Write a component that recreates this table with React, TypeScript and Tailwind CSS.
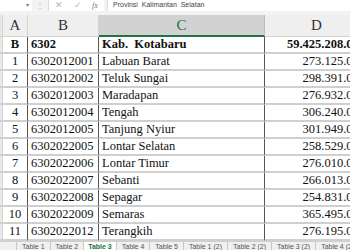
import React from 'react';

const rows = [
  ['1', '6302012001', 'Labuan Barat', '273.125.000'],
  ['2', '6302012002', 'Teluk Sungai', '298.391.000'],
  ['3', '6302012003', 'Maradapan', '276.932.000'],
  ['4', '6302012004', 'Tengah', '306.240.000'],
  ['5', '6302012005', 'Tanjung Nyiur', '301.949.000'],
  ['6', '6302022005', 'Lontar Selatan', '258.529.000'],
  ['7', '6302022006', 'Lontar Timur', '276.010.000'],
  ['8', '6302022007', 'Sebanti', '266.013.000'],
  ['9', '6302022008', 'Sepagar', '254.831.000'],
  ['10', '6302022009', 'Semaras', '365.495.000'],
  ['11', '6302022012', 'Terangkih', '276.195.000'],
];

const tabs = ['Table 1', 'Table 2', 'Table 3', 'Table 4', 'Table 5', 'Table 1 (2)', 'Table 2 (2)', 'Table 3 (2)', 'Table 4 (2)'];

const cell = 'h-[17px] flex items-center border-b-2 border-[#cfcfcf] whitespace-nowrap overflow-hidden';

const App = () => {
  return (
    <div className="w-[350px] h-[250px] overflow-hidden bg-white flex flex-col font-['Liberation_Serif',serif]">
      {/* FORMULA BAR */}
      <div className="h-[15px] shrink-0 bg-[#f3f3f3] flex items-start gap-0 font-['Liberation_Sans',sans-serif]">
        <div className="w-[32px] h-[11px] bg-white flex items-center justify-end pr-[3px] text-[6px] text-[#777]">▾</div>
        <div className="w-[16px] h-[11px] flex items-center justify-center text-[8px] text-[#aaa]">⋮</div>
        <div className="w-[56px] h-[11px] bg-white border-l border-[#dcdcdc] flex items-center text-[#b5b5b5]">
          <span className="w-[19px] text-center text-[9px]">✕</span>
          <span className="w-[19px] text-center text-[9px]">✓</span>
          <span className="w-[16px] text-center text-[8px] italic font-['Liberation_Serif',serif] text-[#777]">fx</span>
        </div>
        <div className="ml-[3px] flex-1 h-[11px] bg-white border-l border-[#dcdcdc] flex items-center pl-[5px] text-[7px] text-[#444]">
          Provinsi&nbsp; Kalimantan&nbsp; Selatan
        </div>
      </div>

      {/* SHEET */}
      <div className="grid grid-cols-[3px_25px_71px_166px_103px] w-[368px] text-[12.5px] text-[#111]">
        {/* column headers */}
        <div className="h-[22px] bg-[#e6e6e6] border-r border-[#d4d4d4] border-b border-b-[#d4d4d4]" />
        <div className="h-[22px] bg-[#efefef] border-r border-[#d4d4d4] border-b border-b-[#d4d4d4] flex items-center justify-center text-[15px] text-[#333]">A</div>
        <div className="h-[22px] bg-[#efefef] border-r border-[#d4d4d4] border-b border-b-[#d4d4d4] flex items-center justify-center text-[15px] text-[#333]">B</div>
        <div className="h-[22px] bg-[#d2d2d2] border-r border-[#bdbdbd] border-b-2 border-b-[#217346] flex items-center justify-center text-[15px] text-[#217346]">C</div>
        <div className="h-[22px] bg-[#efefef] border-b border-b-[#d4d4d4] flex items-center justify-center text-[15px] text-[#333]">D</div>

        {/* header data row */}
        <div className="h-[17px] bg-[#e9e9e9] border-r border-[#d4d4d4] border-b-2 border-b-[#cfcfcf]" />
        <div className={`${cell} justify-center border-r border-r-[#555] font-bold`}>B</div>
        <div className={`${cell} pl-[3px] border-r border-r-[#555] font-bold`}>6302</div>
        <div className={`${cell} pl-[3px] border-r border-r-[#555] font-bold`}>Kab.&nbsp; Kotabaru</div>
        <div className={`${cell} justify-end pr-[3px] font-bold`}>59.425.208.000</div>

        {rows.map((r) => (
          <React.Fragment key={r[0]}>
            <div className="h-[17px] bg-[#e9e9e9] border-r border-[#d4d4d4] border-b-2 border-b-[#cfcfcf]" />
            <div className={`${cell} justify-center border-r border-r-[#555]`}>{r[0]}</div>
            <div className={`${cell} pl-[3px] border-r border-r-[#555]`}>{r[1]}</div>
            <div className={`${cell} pl-[3px] border-r border-r-[#555]`}>{r[2]}</div>
            <div className={`${cell} justify-end pr-[3px]`}>{r[3]}</div>
          </React.Fragment>
        ))}
      </div>

      {/* SHEET TABS */}
      <div className="flex-1 bg-[#f0f0f0] border-t border-[#d0d0d0] flex items-start pl-[16px] font-['Liberation_Sans',sans-serif] text-[7px] text-[#555]">
        {tabs.map((t) => (
          <div
            key={t}
            className={
              t === 'Table 3'
                ? 'h-[10px] px-[4px] flex items-center bg-white font-bold text-[#217346] border-l border-[#c8c8c8] whitespace-nowrap'
                : 'h-[10px] px-[5px] flex items-center border-l border-[#c8c8c8] whitespace-nowrap'
            }
          >
            {t}
          </div>
        ))}
      </div>
    </div>
  );
};

export default App;
